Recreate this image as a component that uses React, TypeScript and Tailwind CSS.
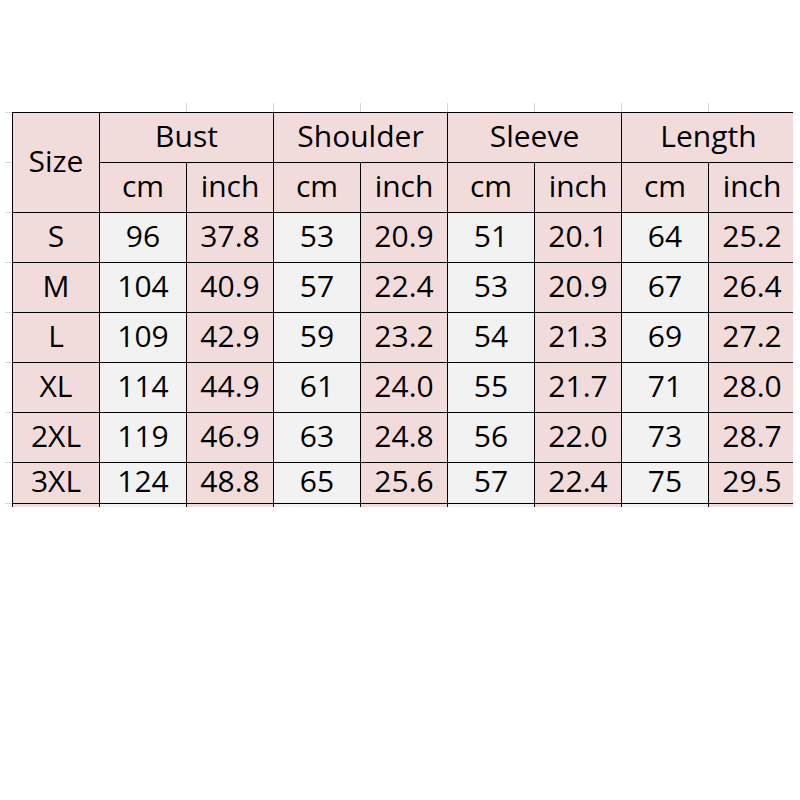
import React from 'react';

const rows = [
  ['S', '96', '37.8', '53', '20.9', '51', '20.1', '64', '25.2'],
  ['M', '104', '40.9', '57', '22.4', '53', '20.9', '67', '26.4'],
  ['L', '109', '42.9', '59', '23.2', '54', '21.3', '69', '27.2'],
  ['XL', '114', '44.9', '61', '24.0', '55', '21.7', '71', '28.0'],
  ['2XL', '119', '46.9', '63', '24.8', '56', '22.0', '73', '28.7'],
  ['3XL', '124', '48.8', '65', '25.6', '57', '22.4', '75', '29.5'],
];

const groups = ['Bust', 'Shoulder', 'Sleeve', 'Length'];

const pink = 'bg-[#f2dcdb]';
const gray = 'bg-[#f2f2f2]';

// column index 0 = size (pink), odd = cm (gray), even = inch (pink)
const cellBg = (i: number) => (i === 0 || i % 2 === 0 ? pink : gray);

const cell = 'flex items-center justify-center pb-[4px]';

export default function App() {
  return (
    <div
      className="min-h-[800px] w-[800px] bg-white pl-[5px] pt-[103px] text-black"
      style={{ fontFamily: '"Open Sans", "Noto Sans", sans-serif' }}
    >
      {/* faint sheet gridlines above the table */}
      <div className="flex h-[9px] pl-[7px]">
        {Array.from({ length: 9 }).map((_, i) => (
          <div
            key={i}
            className={
              i < 2 ? 'w-[87px] shrink-0' : 'w-[87px] shrink-0 border-l border-[#d6d6d6]'
            }
          />
        ))}
      </div>

      <div className="flex">
        {/* faint sheet gridlines left of the table */}
        <div className="flex w-[7px] shrink-0 flex-col">
          {Array.from({ length: 7 }).map((_, i) => (
            <div key={i} className="h-[50px] border-t border-[#d6d6d6]" />
          ))}
          <div className="h-[41px] border-t border-[#d6d6d6]" />
          <div className="h-[3px] border-t border-[#d6d6d6]" />
        </div>

        <div className="h-[395px] w-[781px] overflow-hidden">
          <div className="grid w-[784px] grid-cols-[repeat(9,86px)] grid-rows-[49px_49px_repeat(5,49px)_40px_3px] gap-px bg-black pl-px pt-px text-[30px] leading-none">
            <div className={`${pink} row-span-2 ${cell}`}>Size</div>
            {groups.map((g) => (
              <div key={g} className={`${pink} col-span-2 ${cell}`}>
                {g}
              </div>
            ))}
            {groups.map((g) => (
              <React.Fragment key={g + '-units'}>
                <div className={`${pink} ${cell}`}>cm</div>
                <div className={`${pink} ${cell}`}>inch</div>
              </React.Fragment>
            ))}

            {rows.map((r) =>
              r.map((v, i) => (
                <div key={r[0] + i} className={`${cellBg(i)} ${cell}`}>
                  {v}
                </div>
              ))
            )}

            {/* next sheet row, cut off by the screenshot */}
            {Array.from({ length: 9 }).map((_, i) => (
              <div key={'cut' + i} className={cellBg(i)} />
            ))}
          </div>
        </div>
      </div>
    </div>
  );
}
